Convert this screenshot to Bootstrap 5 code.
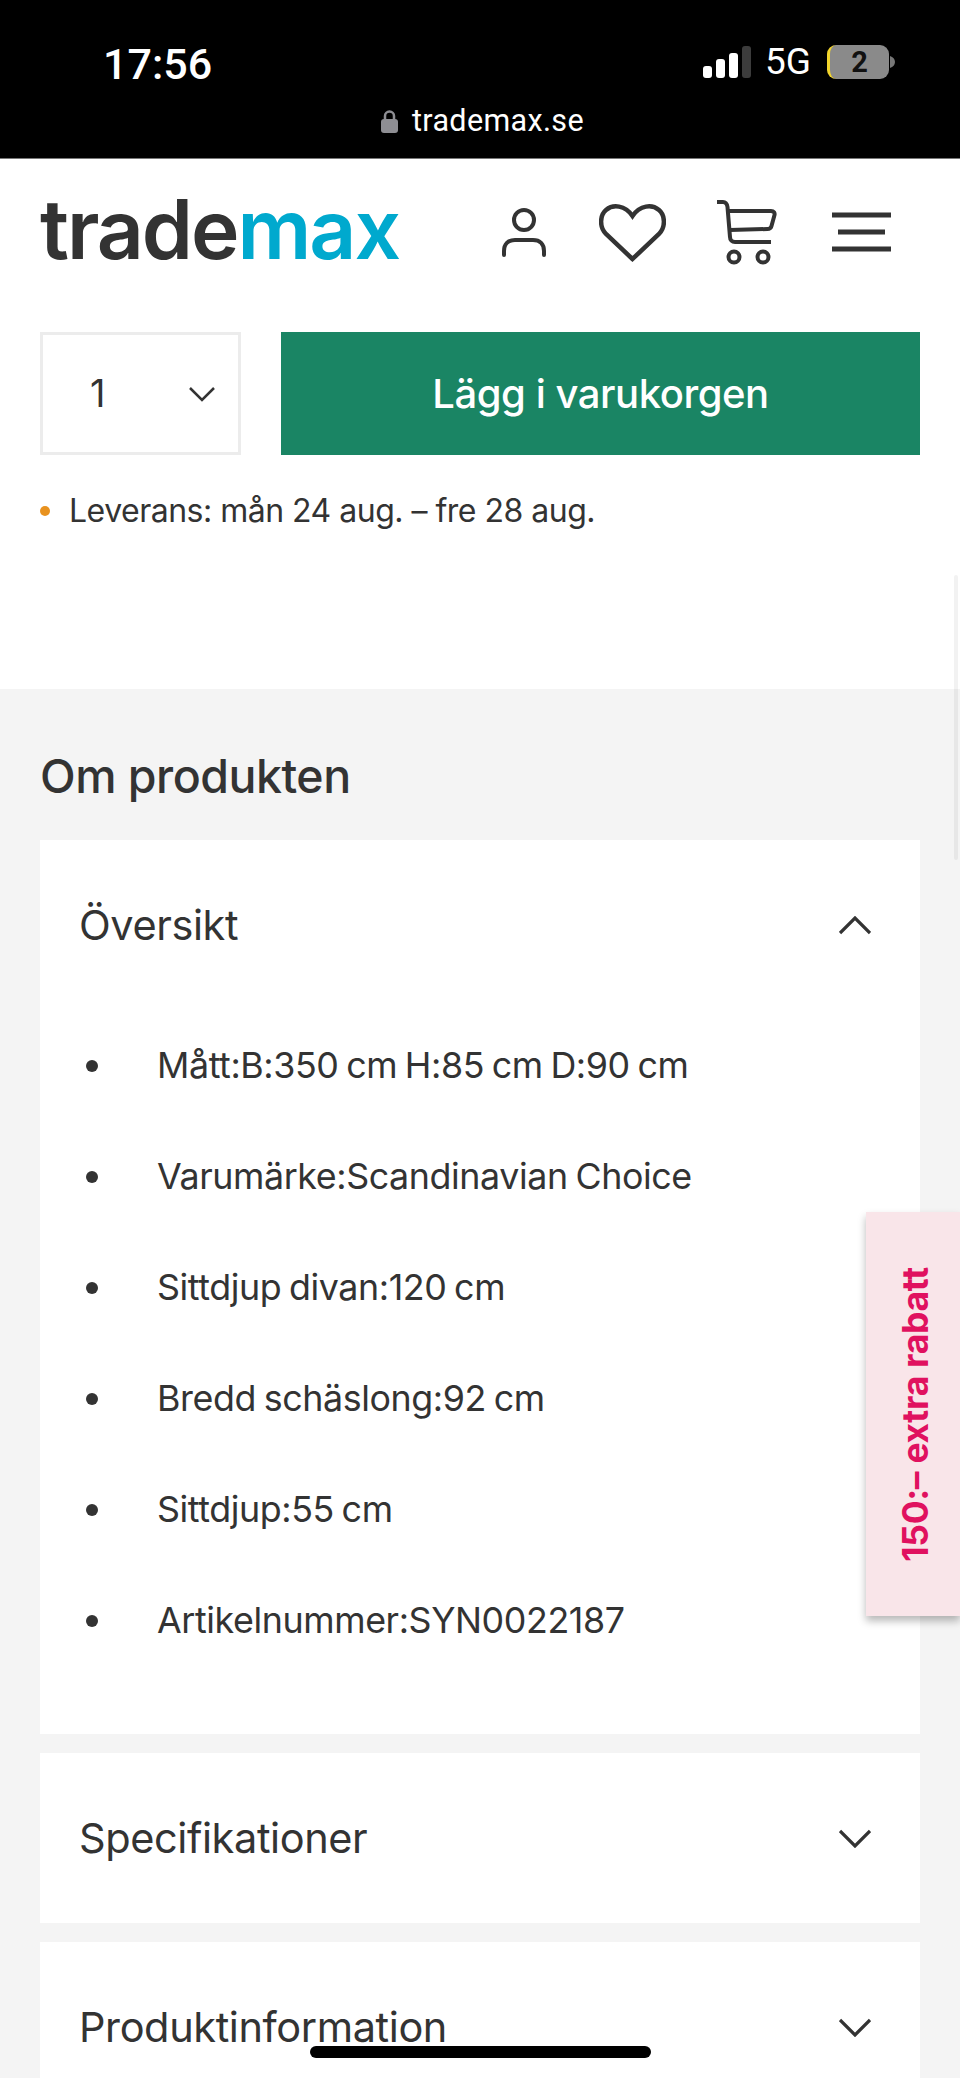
<!DOCTYPE html>
<html lang="sv">
<head>
<meta charset="utf-8">
<title>Trademax</title>
<link href="https://cdn.jsdelivr.net/npm/bootstrap@5.3.0/dist/css/bootstrap.min.css" rel="stylesheet">
<style>
html,body{height:2078px;overflow:hidden}
body{font-family:Inter,"Noto Sans",sans-serif;color:#333;background:#fff;width:960px;position:relative}
.phone-bar{background:#000;height:159px;border-bottom:1px solid #777;color:#fff;position:relative}
.phone-top{padding:42px 65px 0 103px;height:102px}
.phone-time{font-family:Roboto,sans-serif;font-size:43px;line-height:44px;font-weight:500}
.phone-net{font-family:Roboto,sans-serif;font-size:37px;line-height:40px;margin:0 16px 0 14px}
.phone-batt{width:62px;height:34px;background:#8a8a8a;border-radius:9px;border-left:3px solid #f2d52c;color:#111;font:700 29px/34px Roboto,sans-serif;text-align:center}
.phone-nub{margin-left:1px}
.phone-url{font-family:Roboto,sans-serif;font-size:30.5px;line-height:36px;letter-spacing:.35px;gap:14px;height:38px;padding-left:5px}
.site-head{height:130px;padding:0 40px}
.brand-logo{font-size:82px;line-height:80px;font-weight:600;letter-spacing:-2px;color:#333;margin-top:12px}
.brand-logo span{color:#00a9ce}
.head-icons{display:flex;align-items:center;margin-left:auto;margin-right:29px;margin-top:16px}
.ic-heart{margin-left:53px}.ic-cart{margin-left:49px}.ic-menu{margin-left:55px}
.buy-row{padding:43px 40px 0;gap:40px;height:167px}
.qty-box{width:201px;height:123px;border:3px solid #ececec;padding:0 23px 0 47px;font-size:38px;color:#333}
.buy-btn{width:639px;height:123px;background:#1a8564;border:0;border-radius:0;color:#fff;font-size:40px;font-weight:500;letter-spacing:-.45px}
.buy-btn:hover{background:#1a8564;color:#fff}
.ship-row{padding:32px 40px 0;gap:19px;font-size:32px;line-height:46px;letter-spacing:-.5px;height:233px;align-items:flex-start!important}
.ship-dot{width:10px;height:10px;border-radius:50%;background:#e8921f;margin-top:18px;flex:none}
.about{background:#f4f4f4;padding:0 40px;height:1389px}
.about-title{font-size:46.5px;line-height:52px;font-weight:500;letter-spacing:-.5px;padding-top:61px;margin:0 0 38px;color:#333}
.acc-panel{background:#fff;margin-bottom:19px;border:0;border-radius:0}
.acc-head{height:170px;padding:0 49px 0 39px;font-size:41.5px;letter-spacing:-.4px;color:#333}
.acc-list{list-style:none;margin:0;padding:0 0 58px 46px;font-size:35.8px;letter-spacing:-.4px;word-spacing:-2px}
.acc-list li{height:111px;display:flex;align-items:center;gap:59px}
.acc-list li::before{content:"";width:12px;height:12px;background:#333;border-radius:50%;flex:none}
.promo-tab{position:absolute;left:866px;top:1212px;width:94px;height:404px;background:#f9e5e9;box-shadow:0 5px 8px rgba(0,0,0,.28);display:flex;align-items:center;justify-content:center;padding-left:6px}
.promo-tab span{writing-mode:vertical-rl;transform:rotate(180deg);font-family:Inter,sans-serif;font-weight:700;font-size:35.5px;letter-spacing:-.3px;color:#e0115f;white-space:nowrap}
.home-ind{position:absolute;left:310px;top:2046px;width:341px;height:12px;background:#000;border-radius:6px}
.scroll-hint{position:absolute;right:2px;top:575px;width:4px;height:285px;background:rgba(0,0,0,.05);border-radius:2px}
</style>
</head>
<body>
<div class="phone-bar">
  <div class="phone-top d-flex justify-content-between align-items-start">
    <div class="phone-time">17:56</div>
    <div class="d-flex align-items-center">
      <svg width="48" height="32" viewBox="0 0 48 32"><rect x="0" y="20" width="9" height="12" rx="3" fill="#fff"/><rect x="13" y="13" width="9" height="19" rx="3" fill="#fff"/><rect x="26" y="7" width="9" height="25" rx="3" fill="#fff"/><rect x="39" y="0" width="9" height="32" rx="3" fill="#3c3c3c"/></svg>
      <span class="phone-net">5G</span>
      <div class="phone-batt">2</div>
      <svg width="5" height="12" viewBox="0 0 5 12" class="phone-nub"><path d="M0 0c3 1 5 3 5 6s-2 5-5 6z" fill="#777"/></svg>
    </div>
  </div>
  <div class="phone-url d-flex justify-content-center align-items-center">
    <svg width="17" height="24" viewBox="0 0 17 24"><path d="M4 11V7a4.500 4.500 0 0 1 9 0v4" fill="none" stroke="#8e8e93" stroke-width="2.500"/><rect y="10" width="17" height="14" rx="3" fill="#8e8e93"/></svg>
    <span>trademax.se</span>
  </div>
</div>

<header class="site-head d-flex align-items-center">
  <div class="brand-logo">trade<span>max</span></div>
  <div class="head-icons">
    <svg width="44" height="68" viewBox="502 198 44 68" fill="none" stroke="#333" stroke-width="4" stroke-linecap="round"><circle cx="524" cy="220" r="10"/><path d="M504 255v-4c0-7 4-11 11-11h18c7 0 11 4 11 11v4"/></svg>
    <svg class="ic-heart" width="67" height="68" viewBox="0 -5 67 68" fill="none" stroke="#333" stroke-width="4.500" stroke-linejoin="miter"><path d="M33.500 56 7 31C0 24 1 12 7 7c7-6 19-5 26.500 6C41 2 53 1 60 7c6 5 7 17 0 24z"/></svg>
    <svg class="ic-cart" width="62" height="68" viewBox="715 198 62 68" fill="none" stroke="#333" stroke-width="4"><path d="M717 202h6c3 0 4 2 4.500 5l2.500 30c0 3 2 5 5 5h36"/><path d="M728 211h43c3 0 4 2 3.500 4l-3 11c-.5 2-2 3-4 3l-37.500 1"/><circle cx="734" cy="257" r="5.500"/><circle cx="763" cy="257" r="5.500"/></svg>
    <svg class="ic-menu" width="59" height="68" viewBox="832 198 59 68" fill="#333"><rect x="832" y="212.500" width="59" height="5"/><rect x="838" y="229.500" width="47" height="5"/><rect x="832" y="246.500" width="59" height="5"/></svg>
  </div>
</header>

<div class="buy-row d-flex">
  <div class="qty-box d-flex align-items-center justify-content-between">
    <span>1</span>
    <svg width="26" height="16" viewBox="0 0 26 16" fill="none" stroke="#333" stroke-width="2.500"><path d="M1 2l12 12L25 2"/></svg>
  </div>
  <button type="button" class="btn buy-btn">Lägg i varukorgen</button>
</div>

<div class="ship-row d-flex">
  <span class="ship-dot"></span>
  <span>Leverans: mån 24 aug. – fre 28 aug.</span>
</div>
<div class="scroll-hint"></div>

<section class="about">
  <h2 class="about-title">Om produkten</h2>
  <div class="card acc-panel">
    <div class="acc-head d-flex align-items-center justify-content-between">
      <span>Översikt</span>
      <svg width="32" height="19" viewBox="0 0 32 19" fill="none" stroke="#333" stroke-width="3.200"><path d="M1 17 16 2l15 15"/></svg>
    </div>
    <ul class="acc-list">
      <li>Mått:B:350 cm H:85 cm D:90 cm</li>
      <li>Varumärke:Scandinavian Choice</li>
      <li>Sittdjup divan:120 cm</li>
      <li>Bredd schäslong:92 cm</li>
      <li>Sittdjup:55 cm</li>
      <li>Artikelnummer:SYN0022187</li>
    </ul>
  </div>
  <div class="card acc-panel">
    <div class="acc-head d-flex align-items-center justify-content-between">
      <span>Specifikationer</span>
      <svg width="32" height="19" viewBox="0 0 32 19" fill="none" stroke="#333" stroke-width="3.200"><path d="M1 2l15 15L31 2"/></svg>
    </div>
  </div>
  <div class="card acc-panel">
    <div class="acc-head d-flex align-items-center justify-content-between">
      <span>Produktinformation</span>
      <svg width="32" height="19" viewBox="0 0 32 19" fill="none" stroke="#333" stroke-width="3.200"><path d="M1 2l15 15L31 2"/></svg>
    </div>
  </div>
</section>

<div class="promo-tab"><span>150:– extra rabatt</span></div>
<div class="home-ind"></div>
<script src="https://cdn.jsdelivr.net/npm/bootstrap@5.3.0/dist/js/bootstrap.bundle.min.js"></script>
</body>
</html>
